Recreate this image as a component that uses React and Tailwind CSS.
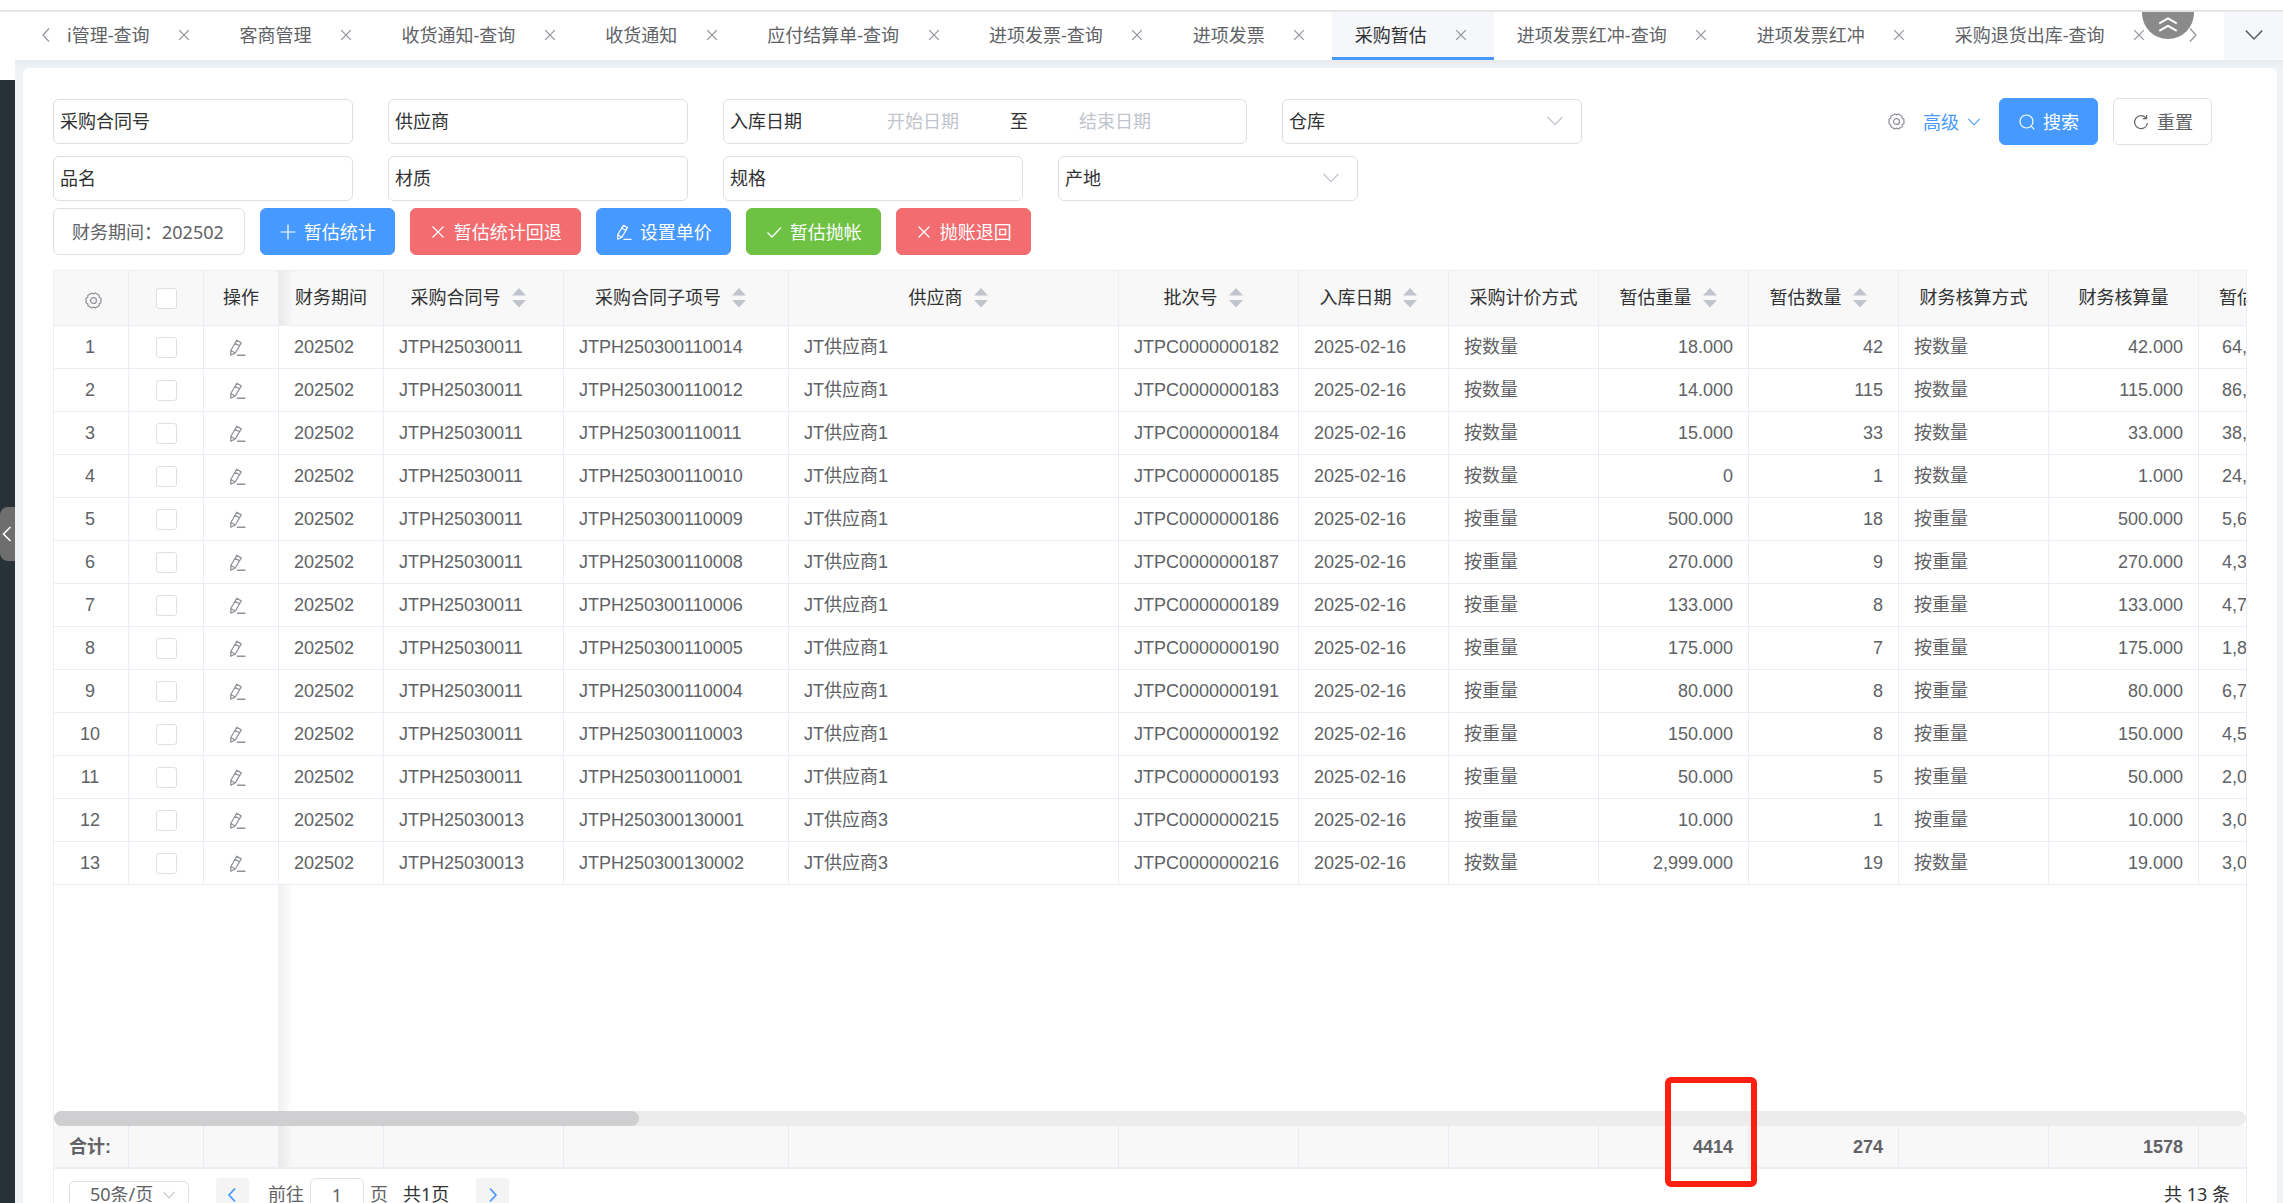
import { useState } from 'react'

const tabs = [
  { label: 'i管理-查询', clipped: true },
  { label: '客商管理' },
  { label: '收货通知-查询' },
  { label: '收货通知' },
  { label: '应付结算单-查询' },
  { label: '进项发票-查询' },
  { label: '进项发票' },
  { label: '采购暂估' },
  { label: '进项发票红冲-查询' },
  { label: '进项发票红冲' },
  { label: '采购退货出库-查询' },
]

const columns = [
  { key: 'period', label: '财务期间', col: 'w-[105px]' },
  { key: 'contract', label: '采购合同号', col: 'w-[180px]', sort: true },
  { key: 'subContract', label: '采购合同子项号', col: 'w-[225px]', sort: true },
  { key: 'supplier', label: '供应商', col: 'w-[330px]', sort: true },
  { key: 'batch', label: '批次号', col: 'w-[180px]', sort: true },
  { key: 'date', label: '入库日期', col: 'w-[150px]', sort: true },
  { key: 'priceMode', label: '采购计价方式', col: 'w-[150px]' },
  { key: 'weight', label: '暂估重量', col: 'w-[150px]', sort: true, right: true, total: '4414' },
  { key: 'count', label: '暂估数量', col: 'w-[150px]', sort: true, right: true, total: '274' },
  { key: 'calcMode', label: '财务核算方式', col: 'w-[150px]' },
  { key: 'calcAmount', label: '财务核算量', col: 'w-[150px]', right: true, total: '1578' },
]

const rows = [
  ['JTPH25030011', '0014', 'JT供应商1', '182', '按数量', '18.000', '42', '42.000', '64,'],
  ['JTPH25030011', '0012', 'JT供应商1', '183', '按数量', '14.000', '115', '115.000', '86,'],
  ['JTPH25030011', '0011', 'JT供应商1', '184', '按数量', '15.000', '33', '33.000', '38,'],
  ['JTPH25030011', '0010', 'JT供应商1', '185', '按数量', '0', '1', '1.000', '24,'],
  ['JTPH25030011', '0009', 'JT供应商1', '186', '按重量', '500.000', '18', '500.000', '5,6'],
  ['JTPH25030011', '0008', 'JT供应商1', '187', '按重量', '270.000', '9', '270.000', '4,3'],
  ['JTPH25030011', '0006', 'JT供应商1', '189', '按重量', '133.000', '8', '133.000', '4,7'],
  ['JTPH25030011', '0005', 'JT供应商1', '190', '按重量', '175.000', '7', '175.000', '1,8'],
  ['JTPH25030011', '0004', 'JT供应商1', '191', '按重量', '80.000', '8', '80.000', '6,7'],
  ['JTPH25030011', '0003', 'JT供应商1', '192', '按重量', '150.000', '8', '150.000', '4,5'],
  ['JTPH25030011', '0001', 'JT供应商1', '193', '按重量', '50.000', '5', '50.000', '2,0'],
  ['JTPH25030013', '0001', 'JT供应商3', '215', '按重量', '10.000', '1', '10.000', '3,0'],
  ['JTPH25030013', '0002', 'JT供应商3', '216', '按数量', '2,999.000', '19', '19.000', '3,0'],
].map(([contract, sub, supplier, batch, mode, weight, count, calcAmount, amount]) => ({
  period: '202502',
  contract,
  subContract: contract + sub,
  supplier,
  batch: 'JTPC0000000' + batch,
  date: '2025-02-16',
  priceMode: mode,
  weight,
  count,
  calcMode: mode,
  calcAmount,
  amount,
}))

const paths = {
  close: 'M2.5 2.5l11 11M13.5 2.5l-11 11',
  plus: 'M8 .5v15M.5 8h15',
  check: 'M1.5 8.5l4.5 4.5 9-9.5',
  edit: 'M7.3 1.2l4.2 2.4-5.6 9.6-4.2 2V10.8zM5.7 4l4.2 2.4M1.7 10.8l4.2 2.4M7.5 15.3h8',
  search: 'M7.5 1a6.5 6.5 0 1 0 0 13a6.5 6.5 0 1 0 0-13M12.3 12.3l3 3',
  refresh: 'M13.3 4.2a6.5 6.5 0 1 0 1.2 4.8M13.6 1v3.7H9.9',
  down: 'M1.5 4.5L8 11.2l6.5-6.7',
  left: 'M11 1.5L5 8l6 6.5',
  right: 'M5 1.5L11 8l-6 6.5',
  doubleUp: 'M1 7.5L8 3.5l7 4M1 13.5l7-4 7 4',
  gear: 'M15 5.9V10.1L13.4 11.1L13.3 13L9.6 15.1L8 14.2L6.4 15.1L2.7 13L2.6 11.1L1 10.1V5.9L2.6 4.9L2.7 3L6.4 .9L8 1.8L9.6 .9L13.3 3L13.4 4.9ZM8 5.2a2.8 2.8 0 1 0 0 5.6a2.8 2.8 0 1 0 0-5.6',
}

function Icon({ name, className = 'size-4', weight = 1.2 }) {
  return (
    <svg
      viewBox="0 0 16 16"
      className={`shrink-0 ${className}`}
      fill="none"
      stroke="currentColor"
      strokeWidth={weight}
      strokeLinejoin="round"
      aria-hidden="true"
    >
      <path d={paths[name]} />
    </svg>
  )
}

function SortCarets() {
  return (
    <span className="flex w-9 shrink-0 justify-center">
      <svg viewBox="0 0 14 20" className="h-5 w-[14px] text-[#c0c4cc]" fill="currentColor" aria-hidden="true">
        <path d="M7 0l7 7.5H0zM0 12h14l-7 7.5z" />
      </svg>
    </span>
  )
}

function TextField({ id, label }) {
  return (
    <div className="flex h-[45px] w-[300px] items-center rounded-md border border-[#dcdfe6] px-[6px] pb-[2px]">
      <label htmlFor={id} className="shrink-0">{label}</label>
      <input id={id} type="text" className="h-full min-w-0 flex-1 pl-3 outline-none" />
    </div>
  )
}

function SelectField({ id, label }) {
  return (
    <div className="flex h-[45px] w-[300px] items-center rounded-md border border-[#dcdfe6] pr-[17px] pb-[2px] pl-[6px]">
      <label htmlFor={id} className="shrink-0">{label}</label>
      <select id={id} className="h-full min-w-0 flex-1 appearance-none outline-none">
        <option value=""></option>
      </select>
      <Icon name="down" className="size-[18px] text-[#c0c4cc]" />
    </div>
  )
}

const tones = {
  primary: 'border-[#4699ff] bg-[#4699ff] text-white',
  danger: 'border-[#f26c70] bg-[#f26c70] text-white',
  success: 'border-[#6dc143] bg-[#6dc143] text-white',
  plain: 'border-[#dcdfe6] bg-white text-[#606266]',
}

function ActionButton({ tone, icon, children }) {
  return (
    <button
      type="button"
      className={`flex h-[47px] items-center gap-2 rounded-md border pr-[18px] pl-[19px] whitespace-nowrap ${tones[tone]}`}
    >
      <Icon name={icon} />
      {children}
    </button>
  )
}

function Checkbox({ label, ...props }) {
  return (
    <input
      type="checkbox"
      aria-label={label}
      className="mx-auto block size-[21px] appearance-none rounded-[3px] border border-[#dcdfe6] bg-white checked:border-[#4699ff] checked:bg-[#4699ff]"
      {...props}
    />
  )
}

function ColGroup() {
  return (
    <colgroup>
      <col className="w-[75px]" />
      <col className="w-[75px]" />
      <col className="w-[75px]" />
      {columns.map((c) => (
        <col key={c.key} className={c.col} />
      ))}
      <col className="w-[150px]" />
    </colgroup>
  )
}

const th = 'h-14 border-y border-r border-[#ebeef5] bg-[#f8f8f8] p-0 font-normal whitespace-nowrap text-[#303133]'
const td = 'h-[43px] border-r border-b border-[#ebeef5] p-0 whitespace-nowrap'
const tf = 'h-[41px] border-r border-[#e8ebf3] bg-[#f8f8f8] p-0'
const pinnedShadow = 'bg-[linear-gradient(to_right,#e9e9e9,#f8f8f8_14px)]'

export default function App() {
  const [activeTab, setActiveTab] = useState('采购暂估')
  const [selected, setSelected] = useState([])

  const toggle = (i) =>
    setSelected(selected.includes(i) ? selected.filter((s) => s !== i) : [...selected, i])

  return (
    <div className="flex h-screen flex-col overflow-hidden bg-white pt-[10px] font-['Noto_Sans','Noto_Sans_CJK_SC',sans-serif] text-[18px] leading-6 text-[#303133]">
      <div className="h-[2px] shrink-0 bg-[#e5e5e5]" />
      <div className="flex min-h-0 flex-1">
        {/* Collapsed side menu */}
        <aside className="flex w-[15px] shrink-0 flex-col pt-[68px]">
          <div className="flex-1 bg-[#263238] pt-[427px]">
            <button
              type="button"
              aria-label="展开菜单"
              className="flex h-[54px] w-full items-center justify-center rounded-l-lg bg-[#6e6e6e] pr-[2px] text-white"
            >
              <svg viewBox="0 0 10 16" className="h-4 w-[10px]" fill="none" stroke="currentColor" strokeWidth="1.6" aria-hidden="true">
                <path d="M8.5 1L1.5 8l7 7" />
              </svg>
            </button>
          </div>
        </aside>

        <div className="flex min-w-0 flex-1 flex-col bg-[#f0f3f5]">
          {/* Page tabs */}
          <nav className="relative flex h-12 shrink-0 overflow-hidden bg-white text-[#606266]">
            <button type="button" aria-label="向左" className="flex w-[52px] shrink-0 items-center pb-[2px] pl-[23px] text-[#909399]">
              <Icon name="left" />
            </button>
            <div className="flex min-w-0 flex-1 overflow-hidden">
              {tabs.map((tab) => (
                <div
                  key={tab.label}
                  className={`flex shrink-0 items-center gap-6 border-b-[3px] pt-px pr-[22px] ${
                    tab.clipped ? 'pl-0' : 'pl-[23px]'
                  } ${
                    tab.label === activeTab
                      ? 'border-[#4699ff] bg-[#f5f7fa] text-[#303133]'
                      : 'border-transparent'
                  }`}
                >
                  <button type="button" className="whitespace-nowrap" onClick={() => setActiveTab(tab.label)}>
                    {tab.label}
                  </button>
                  <button type="button" aria-label={`关闭${tab.label}`} className="flex w-[21px] justify-center text-[#909399]">
                    <Icon name="close" className="size-[14px]" weight={1.4} />
                  </button>
                </div>
              ))}
            </div>
            <button type="button" aria-label="向右" className="flex w-[42px] shrink-0 items-center pb-[2px] pl-[3px] text-[#909399]">
              <Icon name="right" />
            </button>
            <button type="button" aria-label="更多标签" className="flex w-[59px] shrink-0 items-center justify-center bg-[#f5f7fa] pb-[2px]">
              <Icon name="down" className="size-5" />
            </button>
            <button
              type="button"
              aria-label="收起顶栏"
              className="absolute top-0 right-[89px] flex h-[27px] w-[52px] items-center justify-center rounded-b-full bg-[#8a8a8a] pb-[4px] text-white"
            >
              <Icon name="doubleUp" className="size-5" weight={1.6} />
            </button>
          </nav>
          <div className="h-2 shrink-0 bg-linear-to-b from-[#e8ebed] to-[#f0f3f5]" />

          <main className="mr-[6px] ml-2 flex min-h-0 flex-1 flex-col rounded-t-md bg-white px-[30px] pt-[30px]">
            {/* Filters */}
            <form className="flex flex-col" onSubmit={(e) => e.preventDefault()}>
              <div className="flex items-center">
                <div className="flex flex-1 items-center gap-[35px]">
                  <TextField id="contract" label="采购合同号" />
                  <TextField id="supplier" label="供应商" />
                  <div className="flex h-[45px] w-[524px] items-center rounded-md border border-[#dcdfe6] pb-[2px] pl-[6px]">
                    <label htmlFor="dateFrom" className="w-[108px]">入库日期</label>
                    <input
                      id="dateFrom"
                      type="text"
                      placeholder="开始日期"
                      className="w-[170px] text-center outline-none placeholder:text-[#c0c4cc]"
                    />
                    <label htmlFor="dateTo" className="w-[22px] text-center">至</label>
                    <input
                      id="dateTo"
                      type="text"
                      placeholder="结束日期"
                      className="w-[170px] text-center outline-none placeholder:text-[#c0c4cc]"
                    />
                  </div>
                  <SelectField id="warehouse" label="仓库" />
                </div>
                <div className="flex items-center gap-[15px] pr-[35px]">
                  <button type="button" aria-label="设置" className="text-[#909399]">
                    <Icon name="gear" className="size-[17px]" />
                  </button>
                  <a href="#advanced" className="flex items-center gap-2 pr-[3px] pl-[3px] text-[#4699ff]">
                    高级
                    <Icon name="down" className="size-[14px]" />
                  </a>
                  <ActionButton tone="primary" icon="search">搜索</ActionButton>
                  <ActionButton tone="plain" icon="refresh">重置</ActionButton>
                </div>
              </div>
              <div className="flex gap-[35px] pt-[11px]">
                <TextField id="product" label="品名" />
                <TextField id="material" label="材质" />
                <TextField id="spec" label="规格" />
                <SelectField id="origin" label="产地" />
              </div>
            </form>

            {/* Actions */}
            <div className="flex gap-[15px] pt-[7px]">
              <div className="flex h-[47px] items-center rounded-md border border-[#dcdfe6] pr-5 pl-[18px] text-[#606266]">
                财务期间：202502
              </div>
              <ActionButton tone="primary" icon="plus">暂估统计</ActionButton>
              <ActionButton tone="danger" icon="close">暂估统计回退</ActionButton>
              <ActionButton tone="primary" icon="edit">设置单价</ActionButton>
              <ActionButton tone="success" icon="check">暂估抛帐</ActionButton>
              <ActionButton tone="danger" icon="close">抛账退回</ActionButton>
            </div>

            {/* Data grid */}
            <div className="relative mt-[15px] flex min-h-0 flex-1 flex-col border-x border-[#ebeef5] font-['Liberation_Sans','Noto_Sans_CJK_SC',sans-serif] text-[#606266]">
              <div className="overflow-hidden">
                <table className="w-[2295px] table-fixed border-separate border-spacing-0">
                  <ColGroup />
                  <thead>
                    <tr>
                      <th className={th}>
                        <button type="button" aria-label="列设置" className="mx-auto block pt-1 pl-1 text-[#909399]">
                          <Icon name="gear" className="size-[17px]" />
                        </button>
                      </th>
                      <th className={th}>
                        <Checkbox
                          label="全选"
                          checked={selected.length === rows.length}
                          onChange={(e) => setSelected(e.target.checked ? rows.map((_, i) => i) : [])}
                        />
                      </th>
                      <th className={th}>操作</th>
                      {columns.map((c, i) => (
                        <th key={c.key} className={`${th} ${i === 0 ? pinnedShadow : ''}`}>
                          <div className="flex items-center justify-center">
                            {c.label}
                            {c.sort && <SortCarets />}
                          </div>
                        </th>
                      ))}
                      <th className={`${th} text-left`}>
                        <span className="pl-5">暂估</span>
                      </th>
                    </tr>
                  </thead>
                  <tbody>
                    {rows.map((row, i) => (
                      <tr key={row.batch}>
                        <td className={`${td} pr-[2px] text-center`}>{i + 1}</td>
                        <td className={td}>
                          <Checkbox label={`选择第${i + 1}行`} checked={selected.includes(i)} onChange={() => toggle(i)} />
                        </td>
                        <td className={`${td} pr-2`}>
                          <button type="button" aria-label="编辑" className="mx-auto block text-[#909399]">
                            <Icon name="edit" className="size-[17px]" />
                          </button>
                        </td>
                        {columns.map((c) => (
                          <td key={c.key} className={`${td} ${c.right ? 'pr-[15px] text-right' : 'pl-[15px]'}`}>
                            {row[c.key]}
                          </td>
                        ))}
                        <td className={`${td} pl-[23px]`}>{row.amount}</td>
                      </tr>
                    ))}
                  </tbody>
                </table>
              </div>
              <div className="flex min-h-0 flex-1">
                <div className="w-[225px] border-r border-[#f2f3f7]" />
                <div className="w-[14px] bg-linear-to-r from-[#f0f0f0] to-white" />
              </div>
              <div className="h-[15px] shrink-0 rounded-full bg-[#ececec]">
                <div className="h-full w-[585px] rounded-full bg-[#cfcfd1]" />
              </div>
              <div className="shrink-0 overflow-hidden border-b-2 border-[#ebeef5]">
                <table className="w-[2295px] table-fixed border-separate border-spacing-0 font-bold">
                  <ColGroup />
                  <tbody>
                    <tr>
                      <td className={`${tf} pl-[15px]`}>合计:</td>
                      <td className={tf}></td>
                      <td className={tf}></td>
                      {columns.map((c, i) => (
                        <td key={c.key} className={`${tf} pr-[15px] text-right ${i === 0 ? pinnedShadow : ''}`}>
                          {c.total}
                        </td>
                      ))}
                      <td className={tf}></td>
                    </tr>
                  </tbody>
                </table>
              </div>
              {/* Highlight around the weight total */}
              <div className="pointer-events-none absolute right-[489px] -bottom-[18px] h-[110px] w-[92px] rounded-md border-[6px] border-[#ff1f10]" />
            </div>

            {/* Pagination */}
            <div className="flex h-[34px] shrink-0 items-start border-x border-[#ebeef5] pt-[9px] pr-4 pl-[15px] leading-4 text-[#606266]">
              <div className="mt-[3px] flex h-[28px] w-[120px] items-start rounded-md border border-[#dcdfe6] pt-[4px] pr-3 pl-5">
                <select aria-label="每页条数" className="h-4 min-w-0 flex-1 appearance-none leading-4 outline-none">
                  <option>50条/页</option>
                </select>
                <Icon name="down" className="mt-[2px] size-[14px] text-[#c0c4cc]" />
              </div>
              <button type="button" aria-label="上一页" className="ml-[27px] flex size-[33px] items-center justify-center rounded-sm bg-[#f4f4f5] pr-[2px] text-[#4699ff]">
                <Icon name="left" weight={1.8} />
              </button>
              <label htmlFor="page" className="mt-2 ml-[19px]">前往</label>
              <input
                id="page"
                type="text"
                defaultValue="1"
                className="mx-[6px] h-[33px] w-[54px] rounded-md border border-[#dcdfe6] text-center outline-none"
              />
              <span className="mt-2">页</span>
              <span className="mt-2 ml-[15px] text-[#303133]">共1页</span>
              <button type="button" aria-label="下一页" className="ml-[27px] flex size-[33px] items-center justify-center rounded-sm bg-[#f4f4f5] text-[#4699ff]">
                <Icon name="right" weight={1.8} />
              </button>
              <span className="mt-2 ml-auto text-[#303133]">共 13 条</span>
            </div>
          </main>
        </div>
      </div>
    </div>
  )
}
